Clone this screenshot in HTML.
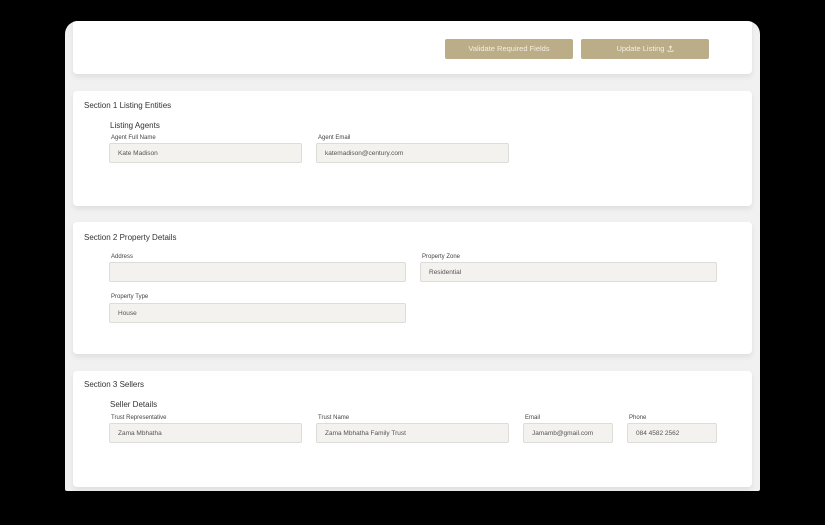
<!DOCTYPE html>
<html><head><style>
*{box-sizing:border-box;margin:0;padding:0}
body{width:825px;height:525px;background:#000;position:relative;overflow:hidden;font-family:"Liberation Sans",sans-serif;color:#333}
.panel{position:absolute;left:65px;top:21px;width:695px;height:470px;background:#f1f1f1;border-radius:13px 13px 2px 2px;overflow:hidden}
.card{position:absolute;left:8px;width:679px;background:#fff;border-radius:4px;box-shadow:0 3px 6px rgba(0,0,0,.08)}
.btn{position:absolute;top:18px;height:20px;background:#bbad87;border-radius:2px;color:#f4efe2;font-size:7.5px;text-align:center;line-height:20px}
.h{position:absolute;font-size:8px;color:#333}
.sh{position:absolute;font-size:8px;color:#333}
.l{position:absolute;font-size:6px;color:#444}
.f{position:absolute;height:20px;background:#f3f2ef;border:1px solid #dcdcd8;border-radius:2px;font-size:6.5px;color:#555;line-height:20px;padding-left:8px}
</style></head><body>
<div class="panel">
 <div class="card" style="top:-4px;height:57px">
  <div class="btn" style="left:372px;width:128px;top:22px">Validate Required Fields</div>
  <div class="btn" style="left:508px;width:128px;top:22px">Update Listing <svg width="7" height="7" viewBox="0 0 7 7" style="vertical-align:-0.5px"><path d="M3.5 5V1M2 2.5L3.5 1 5 2.5M1 5v1.3h5V5" stroke="#f4efe2" stroke-width=".8" fill="none"/></svg></div>
 </div>
 <div class="card" style="top:70px;height:115px">
  <div class="h" style="left:11px;top:10px">Section 1 Listing Entities</div>
  <div class="sh" style="left:37px;top:30px">Listing Agents</div>
  <div class="l" style="left:38px;top:44px">Agent Full Name</div>
  <div class="f" style="left:36px;top:52px;width:193px">Kate Madison</div>
  <div class="l" style="left:245px;top:44px">Agent Email</div>
  <div class="f" style="left:243px;top:52px;width:193px">katemadison@century.com</div>
 </div>
 <div class="card" style="top:201px;height:132px">
  <div class="h" style="left:11px;top:11px">Section 2 Property Details</div>
  <div class="l" style="left:38px;top:32px">Address</div>
  <div class="f" style="left:36px;top:40px;width:297px"></div>
  <div class="l" style="left:349px;top:32px">Property Zone</div>
  <div class="f" style="left:347px;top:40px;width:297px">Residential</div>
  <div class="l" style="left:38px;top:72px">Property Type</div>
  <div class="f" style="left:36px;top:81px;width:297px">House</div>
 </div>
 <div class="card" style="top:350px;height:116px">
  <div class="h" style="left:11px;top:9px">Section 3 Sellers</div>
  <div class="sh" style="left:37px;top:29px">Seller Details</div>
  <div class="l" style="left:38px;top:44px">Trust Representative</div>
  <div class="f" style="left:36px;top:52px;width:193px">Zama Mbhatha</div>
  <div class="l" style="left:245px;top:44px">Trust Name</div>
  <div class="f" style="left:243px;top:52px;width:193px">Zama Mbhatha Family Trust</div>
  <div class="l" style="left:452px;top:44px">Email</div>
  <div class="f" style="left:450px;top:52px;width:90px">Jamamb@gmail.com</div>
  <div class="l" style="left:556px;top:44px">Phone</div>
  <div class="f" style="left:554px;top:52px;width:90px">084 4582 2562</div>
 </div>
</div>
</body></html>
